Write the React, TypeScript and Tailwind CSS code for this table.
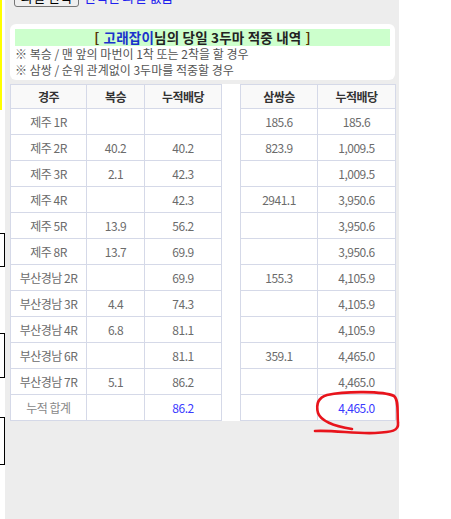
const rows = [
  { race: "제주 1R", bok: "", bokSum: "", sam: "185.6", samSum: "185.6" },
  { race: "제주 2R", bok: "40.2", bokSum: "40.2", sam: "823.9", samSum: "1,009.5" },
  { race: "제주 3R", bok: "2.1", bokSum: "42.3", sam: "", samSum: "1,009.5" },
  { race: "제주 4R", bok: "", bokSum: "42.3", sam: "2941.1", samSum: "3,950.6" },
  { race: "제주 5R", bok: "13.9", bokSum: "56.2", sam: "", samSum: "3,950.6" },
  { race: "제주 8R", bok: "13.7", bokSum: "69.9", sam: "", samSum: "3,950.6" },
  { race: "부산경남 2R", bok: "", bokSum: "69.9", sam: "155.3", samSum: "4,105.9" },
  { race: "부산경남 3R", bok: "4.4", bokSum: "74.3", sam: "", samSum: "4,105.9" },
  { race: "부산경남 4R", bok: "6.8", bokSum: "81.1", sam: "", samSum: "4,105.9" },
  { race: "부산경남 6R", bok: "", bokSum: "81.1", sam: "359.1", samSum: "4,465.0" },
  { race: "부산경남 7R", bok: "5.1", bokSum: "86.2", sam: "", samSum: "4,465.0" },
];

const cell = "border border-[#d5d9e8] text-center align-middle h-[26px] p-0";
const th = "border border-[#d5d9e8] bg-[#f9f9f9] text-center font-bold text-[#333] h-[24px] p-0";
const gap = "border-x border-[#d5d9e8] bg-white p-0";

export default function App() {
  return (
    <div
      className="relative flex h-[519px] w-[451px] overflow-hidden bg-white"
      style={{ fontFamily: "'Noto Sans CJK KR', 'Noto Sans', sans-serif" }}
    >
      {/* neighbouring page fragment */}
      <div className="flex w-[5px] flex-col">
        <div className="h-[110px] w-[2px] bg-[#ffff00]" />
        <div className="mt-[123px] h-[34px] w-[5px] border-y border-r border-black" />
        <div className="mt-[66px] h-[45px] w-[5px] border-y border-r border-black" />
        <div className="mt-[39px] h-[48px] w-[5px] border-y border-r border-black" />
      </div>

      <div className="flex w-[394px] flex-col bg-[#ededed] pl-[5px] pr-[4px]">
        <div className="mt-[-14px] flex items-center gap-[5px] pl-[4px] text-[13px]">
          <button className="h-[21px] rounded-[3px] border border-[#767676] bg-[#efefef] px-[6px] text-[13px] leading-none text-black">
            파일 선택
          </button>
          <span className="text-[#2020ee]">선택된 파일 없음</span>
        </div>

        <div className="mt-[17px] rounded-[6px] bg-white px-[5px] pb-[2px] pt-[5px]">
          <div className="flex h-[17px] items-center justify-center bg-[#ccffcc] text-[13.5px] font-bold leading-[17px] tracking-[0.2px] text-[#222]">
            <span className="text-[#553300]">[</span>
            <span className="ml-[4px] text-[#1a33cc]">고래잡이</span>
            <span>님의 당일 3두마 적중 내역</span>
            <span className="ml-[4px] text-[#553300]">]</span>
          </div>
          <div className="text-[12px] leading-[16px] text-[#555]">
            ※ 복승 / 맨 앞의 마번이 1착 또는 2착을 할 경우
          </div>
          <div className="text-[12px] leading-[16px] text-[#555]">
            ※ 삼쌍 / 순위 관계없이 3두마를 적중할 경우
          </div>
        </div>

        <table className="mt-[4px] w-[385px] table-fixed border-collapse bg-white text-[12px] tracking-[-0.5px] text-[#6b6b6b]">
          <colgroup>
            <col className="w-[76px]" />
            <col className="w-[58px]" />
            <col className="w-[77px]" />
            <col className="w-[19px]" />
            <col className="w-[77px]" />
            <col className="w-[78px]" />
          </colgroup>
          <tbody>
            <tr>
              <th className={th}>경주</th>
              <th className={th}>복승</th>
              <th className={th}>누적배당</th>
              <td className={gap} />
              <th className={th}>삼쌍승</th>
              <th className={th}>누적배당</th>
            </tr>
            {rows.map((r) => (
              <tr key={r.race}>
                <td className={cell}>{r.race}</td>
                <td className={cell}>{r.bok}</td>
                <td className={cell}>{r.bokSum}</td>
                <td className={gap} />
                <td className={cell}>{r.sam}</td>
                <td className={cell}>{r.samSum}</td>
              </tr>
            ))}
            <tr>
              <td className={`${cell} text-[#888]`}>누적 합계</td>
              <td className={cell}></td>
              <td className={`${cell} text-[#3a3aff]`}>86.2</td>
              <td className={gap} />
              <td className={cell}></td>
              <td className={`${cell} text-[#3a3aff]`}>4,465.0</td>
            </tr>
          </tbody>
        </table>
      </div>

      {/* hand-drawn red annotation */}
      <svg className="pointer-events-none absolute left-0 top-0" width="451" height="519">
        <path
          d="M 315 431 C 335 430, 355 434, 375 433 C 392 432, 399 431, 398 423 C 397 412, 399 400, 394 396 C 384 391, 345 391, 327 395 C 317 398, 316 405, 318 413 C 321 421, 333 426, 352 429"
          fill="none"
          stroke="#e8141c"
          strokeWidth="2.6"
          strokeLinecap="round"
        />
      </svg>
    </div>
  );
}
